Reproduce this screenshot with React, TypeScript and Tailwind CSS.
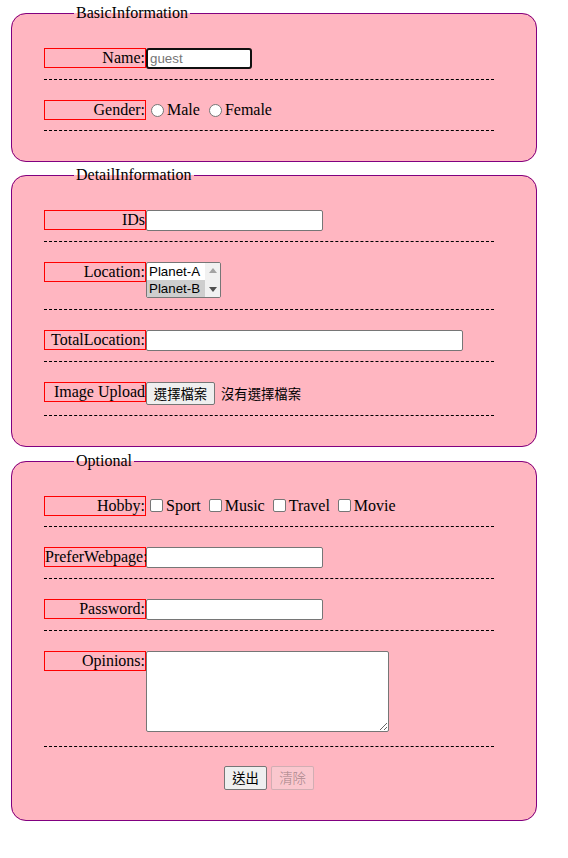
import type {ReactNode} from "react"

const serif = "font-['Liberation_Serif',serif] text-[16px]"
const sans = "font-['Liberation_Sans',Arial,sans-serif] text-[13.33px]"
const cjk = "font-['Noto_Sans_CJK_TC','Liberation_Sans',sans-serif] text-[13.33px]"

function Row({label, children}: {label: string; children: ReactNode}) {
  return (
    <div className="mt-[20px] flex w-[450px] items-start border-b border-dashed border-black pb-[10px]">
      <span className="block h-[20px] w-[102px] shrink-0 whitespace-nowrap border border-[#ff0000] text-right leading-[18px]">
        {label}
      </span>
      {children}
    </div>
  )
}

function TextBox({width, placeholder}: {width: string; placeholder?: string}) {
  return (
    <input
      type="text"
      placeholder={placeholder}
      className={`relative z-10 h-[21px] ${width} rounded-[2px] border border-[#767676] bg-white px-[2px] ${sans} placeholder:text-[#757575]`}
    />
  )
}

function Radio({label}: {label: string}) {
  return (
    <span className="flex items-start">
      <span className="mt-[4px] mr-[3px] ml-[5px] block h-[13px] w-[13px] rounded-full border border-[#767676] bg-white" />
      <span className="pt-[1px] leading-[18px]">{label}</span>
    </span>
  )
}

function Check({label}: {label: string}) {
  return (
    <span className="flex items-start">
      <span className="mt-[3px] mr-[3px] ml-[4px] block h-[13px] w-[13px] rounded-[2px] border border-[#767676] bg-white" />
      <span className="pt-[1px] leading-[18px]">{label}</span>
    </span>
  )
}

function Box({legend, className, children}: {legend: string; className?: string; children: ReactNode}) {
  return (
    <fieldset
      className={`ml-[11px] w-[526px] rounded-[15px] border border-[#800080] bg-[#ffb6c1] pt-[6px] pr-[32px] pb-[30px] pl-[32px] ${className ?? ""}`}>
      <legend className="ml-[30px] px-[2px] leading-[18px]">{legend}</legend>
      {children}
    </fieldset>
  )
}

const App = function App() {
  return (
    <div className={`flex min-h-[858px] flex-col bg-white pt-[4px] text-black ${serif}`}>
      <Box legend="BasicInformation">
        <Row label="Name:">
          <input
            type="text"
            placeholder="guest"
            className={`h-[21px] w-[106px] rounded-[3px] border-2 border-[#101010] bg-white px-[2px] ${sans} placeholder:text-[#757575]`}
          />
        </Row>
        <Row label="Gender:">
          <Radio label="Male" />
          <span className="w-[4px]" />
          <Radio label="Female" />
        </Row>
      </Box>

      <Box legend="DetailInformation" className="mt-[4px]">
        <Row label="IDs">
          <TextBox width="w-[177px]" />
        </Row>
        <Row label="Location:">
          <div className={`mb-[1px] flex h-[36px] w-[75px] overflow-hidden rounded-[2px] border border-[#767676] bg-white ${sans}`}>
            <div className="flex flex-1 flex-col">
              <div className="h-[17px] pl-[2px] leading-[17px]">Planet-A</div>
              <div className="h-[17px] bg-[#cecece] pl-[2px] leading-[17px]">Planet-B</div>
            </div>
            <div className="flex w-[15px] flex-col items-center justify-between bg-[#f1f1f1] py-[5px]">
              <svg width="8" height="5" viewBox="0 0 8 5">
                <path d="M0 5 L4 0 L8 5 Z" fill="#a3a3a3" />
              </svg>
              <svg width="8" height="5" viewBox="0 0 8 5">
                <path d="M0 0 L8 0 L4 5 Z" fill="#505050" />
              </svg>
            </div>
          </div>
        </Row>
        <Row label="TotalLocation:">
          <TextBox width="w-[317px]" />
        </Row>
        <Row label="Image Upload">
          <div className={`flex items-center ${cjk}`}>
            <button className="h-[23px] w-[69px] rounded-[2px] border border-[#767676] bg-[#efefef] leading-[21px]">
              選擇檔案
            </button>
            <span className="ml-[6px]">沒有選擇檔案</span>
          </div>
        </Row>
      </Box>

      <Box legend="Optional" className="mt-[5px]">
        <Row label="Hobby:">
          <Check label="Sport" />
          <span className="w-[4px]" />
          <Check label="Music" />
          <span className="w-[4px]" />
          <Check label="Travel" />
          <span className="w-[4px]" />
          <Check label="Movie" />
        </Row>
        <Row label="PreferWebpage:">
          <TextBox width="w-[177px]" />
        </Row>
        <Row label="Password:">
          <input
            type="password"
            className={`relative z-10 h-[21px] w-[177px] rounded-[2px] border border-[#767676] bg-white px-[2px] ${sans}`}
          />
        </Row>
        <Row label="Opinions:">
          <textarea
            className={`mb-[4px] h-[81px] w-[243px] resize rounded-[2px] border border-[#767676] bg-white p-[2px] ${sans}`}
          />
        </Row>
        <div className={`mt-[19px] flex w-[450px] justify-center gap-[4px] ${cjk}`}>
          <button className="h-[24px] w-[43px] rounded-[2px] border border-[#767676] bg-[#efefef] leading-[22px]">
            送出
          </button>
          <button
            disabled
            className="h-[24px] w-[43px] rounded-[2px] border border-[#76767650] bg-[#efefef4d] leading-[22px] text-[#1010104d]">
            清除
          </button>
        </div>
      </Box>
    </div>
  )
}

export default App
